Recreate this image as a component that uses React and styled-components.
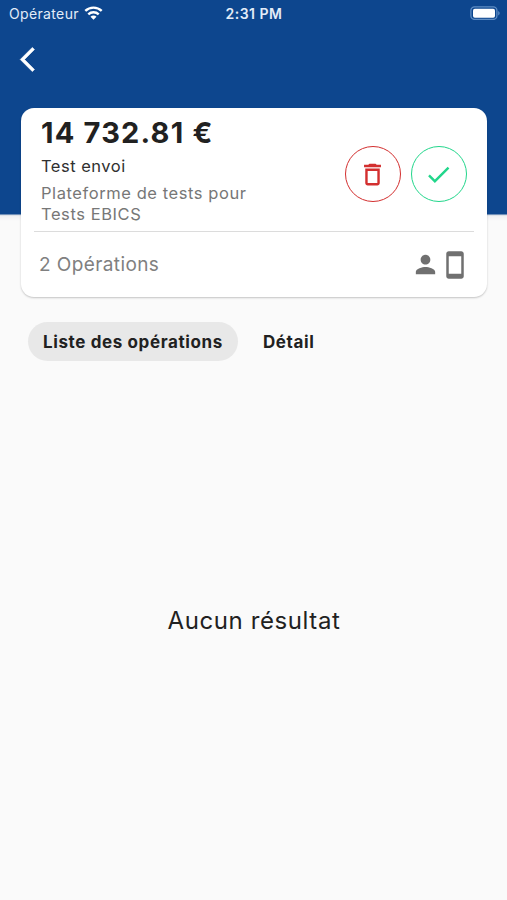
import React from 'react'
import styled, { createGlobalStyle } from 'styled-components'
import {
  MdCheck,
  MdDeleteOutline,
  MdPerson,
  MdStayCurrentPortrait
} from 'react-icons/md'

const GlobalStyle = createGlobalStyle`
  * {
    box-sizing: border-box;
  }
  body {
    margin: 0;
    background-color: #fafafa;
    font-family: Inter, 'Liberation Sans', sans-serif;
    color: #212121;
  }
`

const Screen = styled.div`
  display: flex;
  flex-direction: column;
  height: 900px;
  overflow: hidden;
  background: linear-gradient(#0d468e 214px, #d5dae3 215px, #f1f1f3 216.5px, #fafafa 221px);
`

const StatusBar = styled.div`
  display: grid;
  grid-template-columns: 1fr auto 1fr;
  align-items: center;
  height: 27px;
  padding: 0 7px 0 9px;
  color: #e3ecf8;
`

const Carrier = styled.div`
  display: flex;
  align-items: center;
  gap: 5px;
  font-size: 14px;
  letter-spacing: 0.35px;
  svg {
    display: block;
    margin-top: -1px;
  }
`

const Clock = styled.div`
  margin-right: 1px;
  font-size: 14px;
  font-weight: 600;
  letter-spacing: 0.5px;
`

const BatteryIcon = styled.svg`
  display: block;
  justify-self: end;
  margin-top: -1px;
`

const NavBar = styled.div`
  display: flex;
  height: 81px;
  padding: 18px 13px 0;
  color: white;
`

const BackButton = styled.div`
  width: 29px;
  height: 29px;
`

const Card = styled.div`
  display: flex;
  flex-direction: column;
  height: 189px;
  margin: 0 20px 0 21px;
  padding: 0 13px;
  background-color: white;
  border-radius: 13px;
  box-shadow: 0 1px 2px rgba(0, 0, 0, 0.22);
`

const Summary = styled.div`
  display: flex;
  justify-content: space-between;
  height: 124px;
  padding: 8px 7px 0;
  border-bottom: 1px solid #dcdcdc;
`

const Amount = styled.div`
  font-size: 29px;
  font-weight: 700;
  line-height: 33px;
  letter-spacing: 1.2px;
`

const Label = styled.div`
  margin-top: 6px;
  font-size: 16.5px;
  line-height: 22px;
  letter-spacing: 0.5px;
  color: #303030;
`

const Bank = styled.div`
  width: 230px;
  margin-top: 6px;
  font-size: 16.5px;
  line-height: 21px;
  letter-spacing: 0.57px;
  color: #777;
`

const Actions = styled.div`
  display: flex;
  gap: 10px;
  padding-top: 30px;
`

const RoundButton = styled.div`
  display: flex;
  align-items: center;
  justify-content: center;
  width: 56px;
  height: 56px;
  border: 1.3px solid ${(props) => props.$color};
  border-radius: 50%;
  color: ${(props) => props.$color};
  svg {
    margin-right: 1px;
  }
`

const Footer = styled.div`
  display: flex;
  flex: 1;
  align-items: center;
  justify-content: space-between;
  padding: 0 4px 0 5px;
`

const Count = styled.div`
  font-size: 19px;
  letter-spacing: 0.4px;
  color: #808080;
`

const Signers = styled.div`
  display: flex;
  color: #707070;
`

const Tabs = styled.div`
  display: flex;
  margin-top: 25px;
  padding-left: 28px;
`

const Tab = styled.div`
  height: 39px;
  padding: 0 15px;
  margin-right: 10px;
  border-radius: 20px;
  background-color: ${(props) => (props.$active ? '#e8e8e8' : 'transparent')};
  font-size: 17px;
  font-weight: 700;
  line-height: 40px;
  letter-spacing: 0.62px;
  white-space: nowrap;
`

const Empty = styled.div`
  display: flex;
  flex: 1;
  align-items: center;
  justify-content: center;
  padding: 0 0 20px 1px;
  font-size: 24px;
  letter-spacing: 0.6px;
`

const BackIcon = () => (
  <svg width="29" height="29" viewBox="0 0 24 24" fill="white" stroke="white" strokeWidth="0.5">
    <path d="M17.77 3.77L16 2 6 12l10 10 1.77-1.77L9.54 12z" />
  </svg>
)

const WifiIcon = () => (
  <svg width="19" height="14" viewBox="0 0 19 14" fill="none" stroke="white" strokeWidth="2.4">
    <path d="M1.3 4.9a11.8 11.8 0 0 1 16.4 0" />
    <path d="M4.3 8.3a7.5 7.5 0 0 1 10.4 0" />
    <path d="M9.5 13.8L6.5 10.8a4.2 4.2 0 0 1 6 0z" fill="white" stroke="none" />
  </svg>
)

const Battery = () => (
  <BatteryIcon width="30" height="14" viewBox="0 0 30 14">
    <rect x="0.9" y="0.8" width="26" height="12.6" rx="3.6" fill="none" stroke="#5f8dc4" strokeWidth="1.3" />
    <rect x="3" y="2.7" width="22" height="9" rx="1.8" fill="white" />
    <path d="M28.2 5v4.4c1.9-.8 1.9-3.6 0-4.4z" fill="#5f8dc4" />
  </BatteryIcon>
)

export default function App() {
  return (
    <>
      <GlobalStyle />
      <Screen>
        <StatusBar>
          <Carrier>
            Opérateur
            <WifiIcon />
          </Carrier>
          <Clock>2:31 PM</Clock>
          <Battery />
        </StatusBar>
        <NavBar>
          <BackButton>
            <BackIcon />
          </BackButton>
        </NavBar>
        <Card>
          <Summary>
            <div>
              <Amount>14 732.81 €</Amount>
              <Label>Test envoi</Label>
              <Bank>Plateforme de tests pour Tests EBICS</Bank>
            </div>
            <Actions>
              <RoundButton $color="#d32f2f">
                <MdDeleteOutline size={29} />
              </RoundButton>
              <RoundButton $color="#22d68b">
                <MdCheck size={29} />
              </RoundButton>
            </Actions>
          </Summary>
          <Footer>
            <Count>2 Opérations</Count>
            <Signers>
              <MdPerson size={29} />
              <MdStayCurrentPortrait size={30} />
            </Signers>
          </Footer>
        </Card>
        <Tabs>
          <Tab $active>Liste des opérations</Tab>
          <Tab>Détail</Tab>
        </Tabs>
        <Empty>Aucun résultat</Empty>
      </Screen>
    </>
  )
}
